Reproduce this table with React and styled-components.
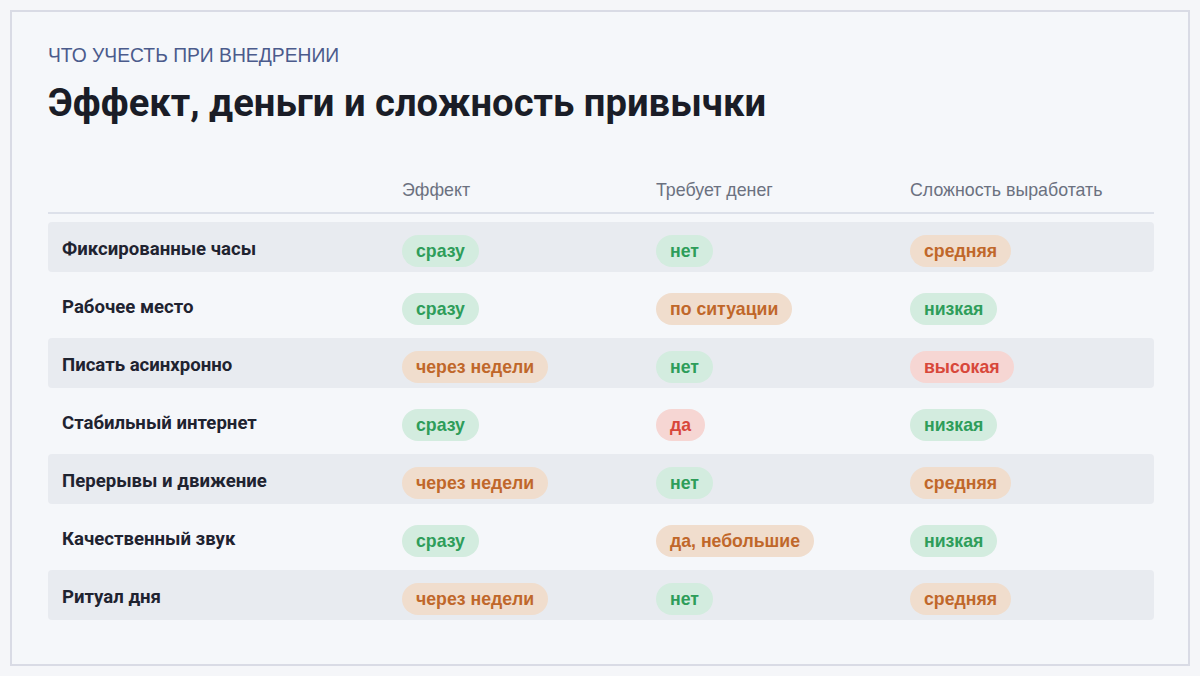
import React from "react";
import styled, { createGlobalStyle } from "styled-components";

const Global = createGlobalStyle`
  html, body { margin: 0; padding: 0; background: #f5f6f9; }
  body { font-family: "Liberation Sans", Arial, sans-serif; }
`;

const Frame = styled.div`
  box-sizing: border-box;
  margin: 10px;
  height: 656px;
  border: 2px solid #d9dbe5;
  background: #f5f7fa;
  padding: 34px 34px 0 36px;
`;

const Eyebrow = styled.div`
  font-size: 19.3px;
  line-height: 20px;
  color: #4b5b8c;
`;

const Title = styled.h1`
  margin: 15px 0 0;
  font-family: Roboto, "Liberation Sans", sans-serif;
  font-size: 38.2px;
  line-height: 44px;
  font-weight: 700;
  color: #1a1d27;
`;

const Table = styled.div`
  margin-top: 55px;
  display: grid;
  grid-template-columns: 340px 254px 254px 1fr;
  row-gap: 8px;
`;

const HeadRow = styled.div`
  display: contents;
`;

const HeadCell = styled.div`
  padding: 0 14px 12px;
  font-size: 17.8px;
  line-height: 20px;
  color: #6b7180;
  border-bottom: 2px solid #dde1ea;
`;

const Row = styled.div`
  grid-column: 1 / -1;
  display: grid;
  grid-template-columns: subgrid;
  height: 50px;
  align-items: center;
  border-radius: 4px;
  background: ${(p) => (p.$striped ? "#e8ebf0" : "transparent")};
`;

const Label = styled.div`
  padding-left: 14px;
  font-family: Roboto, "Liberation Sans", sans-serif;
  font-size: 18.6px;
  font-weight: 700;
  color: #1f2330;
  margin-top: 3px;
`;

const Cell = styled.div`
  padding-left: 14px;
  display: flex;
  align-items: center;
`;

const tones = {
  green: { fg: "#2e9d5a", bg: "#d3ecdf" },
  orange: { fg: "#c0672a", bg: "#f0ddcd" },
  red: { fg: "#d8473a", bg: "#f6d6d3" },
};

const Pill = styled.span`
  display: inline-flex;
  align-items: center;
  height: 32px;
  padding: 0 14px;
  border-radius: 16px;
  font-weight: 700;
  font-size: 17.7px;
  color: ${(p) => tones[p.$tone].fg};
  background: ${(p) => tones[p.$tone].bg};
  margin-top: 8px;
`;

const rows = [
  ["Фиксированные часы", ["сразу", "green"], ["нет", "green"], ["средняя", "orange"]],
  ["Рабочее место", ["сразу", "green"], ["по ситуации", "orange"], ["низкая", "green"]],
  ["Писать асинхронно", ["через недели", "orange"], ["нет", "green"], ["высокая", "red"]],
  ["Стабильный интернет", ["сразу", "green"], ["да", "red"], ["низкая", "green"]],
  ["Перерывы и движение", ["через недели", "orange"], ["нет", "green"], ["средняя", "orange"]],
  ["Качественный звук", ["сразу", "green"], ["да, небольшие", "orange"], ["низкая", "green"]],
  ["Ритуал дня", ["через недели", "orange"], ["нет", "green"], ["средняя", "orange"]],
];

export default function App() {
  return (
    <>
      <Global />
      <Frame>
        <Eyebrow>ЧТО УЧЕСТЬ ПРИ ВНЕДРЕНИИ</Eyebrow>
        <Title>Эффект, деньги и сложность привычки</Title>
        <Table>
          <HeadRow>
            <HeadCell />
            <HeadCell>Эффект</HeadCell>
            <HeadCell>Требует денег</HeadCell>
            <HeadCell>Сложность выработать</HeadCell>
          </HeadRow>
          {rows.map(([label, ...cells], i) => (
            <Row key={label} $striped={i % 2 === 0}>
              <Label>{label}</Label>
              {cells.map(([text, tone], j) => (
                <Cell key={j}>
                  <Pill $tone={tone}>{text}</Pill>
                </Cell>
              ))}
            </Row>
          ))}
        </Table>
      </Frame>
    </>
  );
}
